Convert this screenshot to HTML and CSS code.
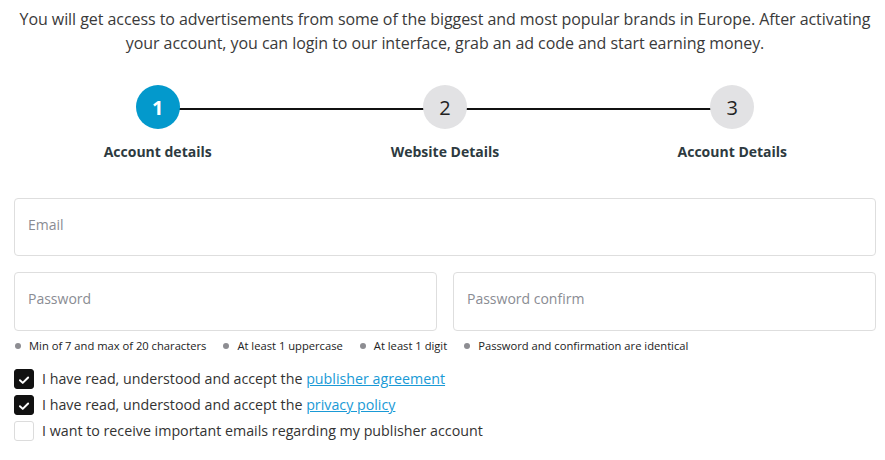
FILE: index.html
```html
<!DOCTYPE html>
<html>
<head>
<meta charset="utf-8">
<link rel="stylesheet" href="styles.css">
</head>
<body>
<div class="page">
  <p class="intro">You will get access to advertisements from some of the biggest and most popular brands in Europe. After activating your account, you can login to our interface, grab an ad code and start earning money.</p>
  <div class="steps">
    <div class="step step-first active">
      <div class="circle">1</div>
      <div class="label">Account details</div>
    </div>
    <div class="step">
      <div class="circle">2</div>
      <div class="label">Website Details</div>
    </div>
    <div class="step step-last">
      <div class="circle">3</div>
      <div class="label">Account Details</div>
    </div>
  </div>
  <div class="field field-full"><span class="ph">Email</span></div>
  <div class="row">
    <div class="field"><span class="ph">Password</span></div>
    <div class="field"><span class="ph">Password confirm</span></div>
  </div>
  <ul class="rules">
    <li>Min of 7 and max of 20 characters</li>
    <li>At least 1 uppercase</li>
    <li>At least 1 digit</li>
    <li>Password and confirmation are identical</li>
  </ul>
  <div class="checks">
    <label class="check"><span class="box checked"><svg viewBox="0 0 20 20" width="20" height="20"><path d="M5.5 10.3 L8.6 13.2 L14.6 7.2" fill="none" stroke="#fff" stroke-width="2.2" stroke-linecap="round" stroke-linejoin="round"/></svg></span>I have read, understood and accept the <a href="#">publisher agreement</a></label>
    <label class="check"><span class="box checked"><svg viewBox="0 0 20 20" width="20" height="20"><path d="M5.5 10.3 L8.6 13.2 L14.6 7.2" fill="none" stroke="#fff" stroke-width="2.2" stroke-linecap="round" stroke-linejoin="round"/></svg></span>I have read, understood and accept the <a href="#">privacy policy</a></label>
    <label class="check"><span class="box"></span>I want to receive important emails regarding my publisher account</label>
  </div>
</div>
</body>
</html>
```

FILE: styles.css
```css
html, body {
  margin: 0;
  padding: 0;
  background: #fff;
}
body {
  font-family: "Open Sans", "Noto Sans", sans-serif;
  color: #333;
}
.page {
  padding: 8px 9px 0 14px;
}
.intro {
  margin: 0;
  font-size: 16px;
  letter-spacing: -0.06px;
  line-height: 23.5px;
  text-align: center;
  color: #3a3a3a;
}
.steps {
  display: grid;
  grid-template-columns: 1fr 1fr 1fr;
  margin-top: 30px;
}
.step {
  position: relative;
  display: flex;
  flex-direction: column;
  align-items: center;
}
.step::before,
.step::after {
  content: "";
  position: absolute;
  top: 23px;
  height: 1.5px;
  background: #111;
  width: 50%;
}
.step::before { left: 0; }
.step::after { right: 0; }
.step-first::before,
.step-last::after { display: none; }
.circle {
  position: relative;
  z-index: 1;
  width: 44px;
  height: 44px;
  border-radius: 50%;
  background: #e2e2e4;
  color: #222;
  font-size: 20px;
  display: flex;
  align-items: center;
  justify-content: center;
}
.active .circle {
  background: #0399cc;
  color: #fff;
  font-weight: 700;
}
.label {
  margin-top: 13px;
  font-size: 14px;
  font-weight: 700;
  color: #2d3a40;
  line-height: 20px;
}
.field {
  flex: 1;
  height: 58px;
  box-sizing: border-box;
  border: 1px solid #dedede;
  border-radius: 4px;
  padding: 16px 13px 0;
  font-size: 14px;
  line-height: 20px;
}
.field-full {
  margin-top: 36px;
}
.ph {
  color: #8a8c93;
}
.row {
  display: flex;
  gap: 16px;
  margin-top: 16px;
}
.row .field { height: 59px; }
.rules {
  list-style: none;
  margin: 7px 0 0;
  padding: 0;
  display: flex;
  gap: 16px;
  font-size: 11.2px;
  line-height: 16px;
  color: #222;
}
.rules li {
  display: flex;
  align-items: center;
}
.rules li::before {
  content: "";
  width: 6px;
  height: 6px;
  border-radius: 50%;
  background: #8d8d92;
  margin: 0 8px 0 1px;
}
.checks {
  margin-top: 15px;
  display: flex;
  flex-direction: column;
  gap: 6px;
}
.check {
  display: flex;
  align-items: center;
  font-size: 14.25px;
  line-height: 20px;
  color: #333;
  white-space: pre;
}
.box {
  width: 20px;
  height: 20px;
  box-sizing: border-box;
  border: 1px solid #dcdcdc;
  border-radius: 3px;
  margin-right: 8px;
  display: flex;
  flex-shrink: 0;
}
.box.checked {
  background: #111;
  border-color: #111;
}
.check a {
  color: #1a9ad6;
  text-decoration: underline;
}
```
